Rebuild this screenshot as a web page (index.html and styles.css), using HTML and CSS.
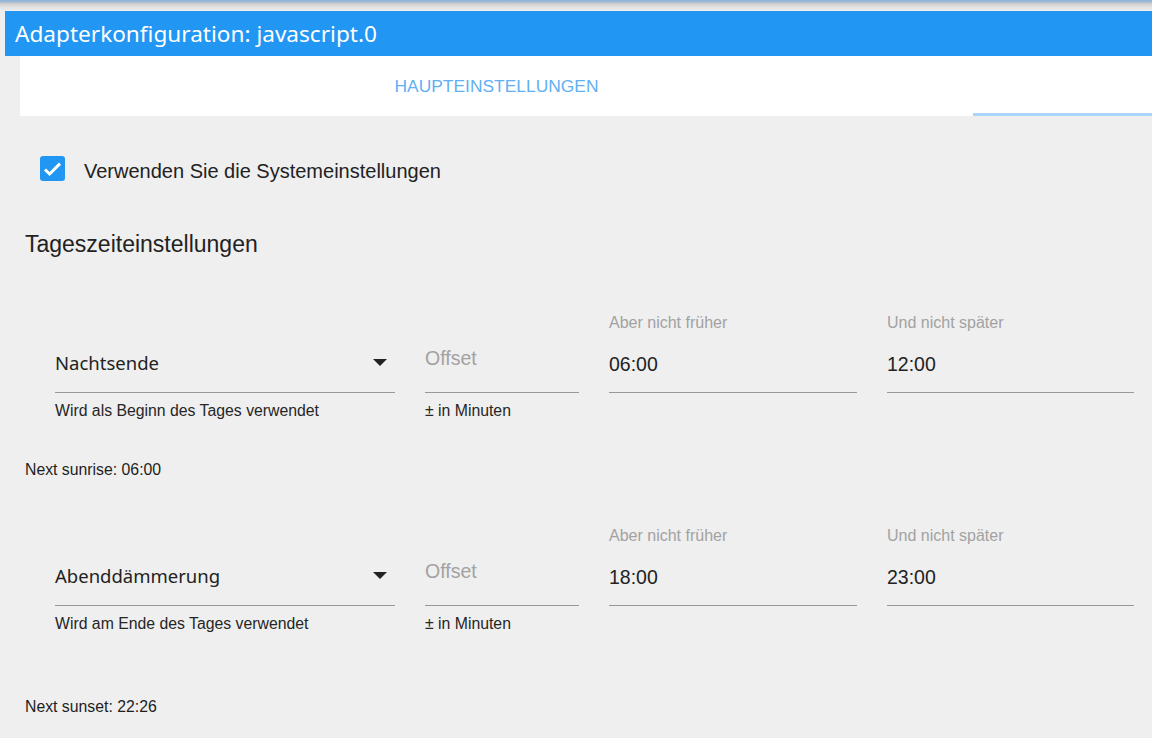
FILE: index.html
```
<!DOCTYPE html>
<html lang="de">
<head>
<meta charset="utf-8">
<title>Adapterkonfiguration: javascript.0</title>
<link rel="stylesheet" href="styles.css">
</head>
<body>
<div class="top-strip"></div>
<header class="header">Adapterkonfiguration: javascript.0</header>
<nav class="tabs">
  <div class="tab">HAUPTEINSTELLUNGEN</div>
  <div class="tab-indicator"></div>
</nav>
<main class="content">
  <label class="check-row">
    <span class="checkbox">
      <svg width="25" height="25" viewBox="0 0 25 25"><polyline points="5,13.5 9.6,18 20,7.6" fill="none" stroke="#fff" stroke-width="3"/></svg>
    </span>
    <span class="check-label">Verwenden Sie die Systemeinstellungen</span>
  </label>

  <h2 class="section-title">Tageszeiteinstellungen</h2>

  <div class="row row-first">
    <div class="field">
      <div class="lbl"></div>
      <div class="inp inp-select"><span class="select-value">Nachtsende</span><svg class="arrow" width="14" height="7" viewBox="0 0 14 7"><polygon points="0,0 14,0 7,7" fill="#222"/></svg></div>
      <div class="helper">Wird als Beginn des Tages verwendet</div>
    </div>
    <div class="field">
      <div class="lbl"></div>
      <div class="inp inp-placeholder">Offset</div>
      <div class="helper">± in Minuten</div>
    </div>
    <div class="field">
      <div class="lbl">Aber nicht früher</div>
      <div class="inp">06:00</div>
    </div>
    <div class="field">
      <div class="lbl">Und nicht später</div>
      <div class="inp">12:00</div>
    </div>
  </div>
  <div class="next next-first">Next sunrise: 06:00</div>

  <div class="row row-second">
    <div class="field">
      <div class="lbl"></div>
      <div class="inp inp-select"><span class="select-value">Abenddämmerung</span><svg class="arrow" width="14" height="7" viewBox="0 0 14 7"><polygon points="0,0 14,0 7,7" fill="#222"/></svg></div>
      <div class="helper">Wird am Ende des Tages verwendet</div>
    </div>
    <div class="field">
      <div class="lbl"></div>
      <div class="inp inp-placeholder">Offset</div>
      <div class="helper">± in Minuten</div>
    </div>
    <div class="field">
      <div class="lbl">Aber nicht früher</div>
      <div class="inp">18:00</div>
    </div>
    <div class="field">
      <div class="lbl">Und nicht später</div>
      <div class="inp">23:00</div>
    </div>
  </div>
  <div class="next next-second">Next sunset: 22:26</div>
</main>
</body>
</html>
```
FILE: styles.css
```
html, body {
  margin: 0;
  padding: 0;
  background: #efefef;
  height: 100%;
  overflow: hidden;
}
body {
  font-family: "Liberation Sans", Arial, sans-serif;
  color: #222;
}
.top-strip {
  height: 11px;
  background: linear-gradient(to bottom, #8fb2d5 0, #9bbbdb 2px, #c8c8c8 3px, #dedede 6px, #ebebeb 10px, #efefef 11px);
}
.header {
  margin-left: 5px;
  height: 45px;
  box-sizing: border-box;
  padding: 1px 0 0 10px;
  line-height: 44px;
  background: #2196f3;
  color: #fff;
  font-family: "Noto Sans", "Open Sans", sans-serif;
  font-size: 22.6px;
}
.tabs {
  position: relative;
  margin-left: 20px;
  height: 60px;
  background: #fff;
  display: flex;
}
.tab {
  width: 953px;
  text-align: center;
  line-height: 60px;
  font-size: 17.4px;
  color: #62aff3;
}
.tab-indicator {
  position: absolute;
  left: 953px;
  right: 0;
  bottom: 0;
  height: 3px;
  background: #abd6f9;
}
.content {
  padding: 0 25px;
}
.check-row {
  display: flex;
  align-items: center;
  margin: 40px 0 0 15px;
  height: 25px;
}
.checkbox {
  width: 25px;
  height: 25px;
  border-radius: 3px;
  background: #2196f3;
  display: block;
}
.checkbox svg {
  display: block;
}
.check-label {
  margin-left: 19px;
  font-size: 20px;
  line-height: 25px;
  padding-top: 5px;
  color: #222;
}
.section-title {
  margin: 49px 0 0 0;
  font-weight: normal;
  font-size: 23px;
  line-height: 28px;
  color: #222;
}
.row {
  display: grid;
  grid-template-columns: 340px 154px 248px 247px;
  column-gap: 30px;
  margin-left: 30px;
}
.row-first {
  margin-top: 53px;
}
.row-second {
  margin-top: 44px;
}
.field {
  display: flex;
  flex-direction: column;
}
.lbl {
  height: 20px;
  padding-top: 2px;
  line-height: 20px;
  font-size: 16px;
  color: #a2a2a2;
  white-space: nowrap;
}
.inp {
  padding: 19px 0 16px 0;
  line-height: 24px;
  height: 24px;
  font-size: 19.5px;
  color: #222;
  border-bottom: 1px solid #989898;
}
.inp-placeholder {
  padding: 13px 0 22px 0;
  color: #a2a2a2;
}
.inp-select {
  display: flex;
  align-items: center;
  padding: 18px 0 17px 0;
}
.select-value {
  flex: 1;
  font-family: "Noto Sans", "Open Sans", sans-serif;
  font-size: 18.5px;
  color: #222;
}
.arrow {
  display: block;
  margin: 0 8px 0 0;
  position: relative;
  top: -1px;
}
.helper {
  margin-top: 8px;
  line-height: 20px;
  font-size: 15.8px;
  color: #262626;
  white-space: nowrap;
}
.next {
  font-size: 15.8px;
  line-height: 20px;
  color: #1e1e1e;
}
.next-first {
  margin-top: 39px;
}
.next-second {
  margin-top: 63px;
}
```
